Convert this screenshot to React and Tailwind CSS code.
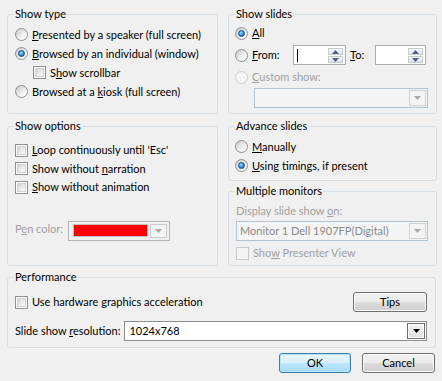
import clsx from "clsx";

const Group = ({ title, className, children }) => (
  <fieldset className={clsx("border border-[#d5dfe5] rounded-[3px] px-0 pb-0 m-0 min-w-0", className)}>
    <legend className="ml-[6px] px-[1px] leading-[16px] text-black">{title}</legend>
    {children}
  </fieldset>
);

const Radio = ({ checked, disabled }) => (
  <span
    className={clsx(
      "flex items-center justify-center w-[13px] h-[13px] rounded-full border shrink-0",
      disabled
        ? "border-[#cfcfcf] bg-[#f4f4f4]"
        : "border-[#8e8f8f] bg-[linear-gradient(135deg,#c8c8c8,#f4f4f4_65%,#ffffff)]"
    )}
  >
    {checked && (
      <span className="w-[7px] h-[7px] rounded-full border border-[#1b4f86] bg-[radial-gradient(circle_at_40%_35%,#9ddcff,#2f8fd6_55%,#11508f)]" />
    )}
  </span>
);

const Check = ({ disabled }) => (
  <span
    className={clsx(
      "flex w-[13px] h-[13px] border p-[1px] shrink-0",
      disabled ? "border-[#c9c9c9] bg-[#f4f4f4]" : "border-[#8e8f8f] bg-white"
    )}
  >
    {!disabled && (
      <span className="flex-1 border border-[#cfd1d4] bg-[linear-gradient(135deg,#cdd0d4,#f2f2f2_70%,#fafafa)]" />
    )}
  </span>
);

const Arrow = ({ color = "#a0a0a0", up = false }) => (
  <svg width="7" height="4" viewBox="0 0 7 4">
    <path d={up ? "M0 4 L3.5 0 L7 4 Z" : "M0 0 L7 0 L3.5 4 Z"} fill={color} />
  </svg>
);

const Spin = ({ width, caret }) => (
  <div className={clsx("relative h-[20px] border border-[#abadb3] bg-white flex items-center", width)}>
    {caret && <span className="ml-[3px] w-[1px] h-[13px] bg-black" />}
    <div className="absolute right-[2px] top-[2px] flex flex-col gap-[1px]">
      <span className="w-[15px] h-[7px] flex items-center justify-center border border-[#c6cdd6] bg-[linear-gradient(#f3f6fa,#dde4ee)]">
        <Arrow color="#4c6088" up />
      </span>
      <span className="w-[15px] h-[7px] flex items-center justify-center border border-[#c6cdd6] bg-[linear-gradient(#f3f6fa,#dde4ee)]">
        <Arrow color="#4c6088" />
      </span>
    </div>
  </div>
);

const DisabledCombo = ({ className, text }) => (
  <div className={clsx("h-[20px] border border-[#b5c3d1] bg-[#f4f4f4] flex items-center p-[1px]", className)}>
    <span className="flex-1 pl-[2px] text-[#8a8a8a] truncate">{text}</span>
    <span className="w-[17px] h-full flex items-center justify-center border border-[#d2d2d2] bg-[#f4f4f4]">
      <Arrow color="#a8a8a8" />
    </span>
  </div>
);

const Btn = ({ children, primary, className }) => (
  <button
    className={clsx(
      "h-[20px] rounded-[3px] border flex items-center justify-center text-black",
      primary
        ? "border-[#3c7fb1] bg-[linear-gradient(#eaf6fd,#d9f0fc_50%,#bee6fd_50%,#a7d9f5)] shadow-[inset_0_0_0_1px_#b3e0f9]"
        : "border-[#707070] bg-[linear-gradient(#f2f2f2,#ebebeb_50%,#dddddd_50%,#cfcfcf)] shadow-[inset_0_0_0_1px_#fcfcfc]",
      className
    )}
  >
    {children}
  </button>
);

const Row = ({ className, children }) => (
  <div className={clsx("flex items-center gap-[4px] whitespace-nowrap", className)}>{children}</div>
);

export default function App() {
  return (
    <div className="w-[442px] h-[381px] bg-[#f0f0f0] text-[11px] leading-[16px] text-black font-['Lato',sans-serif] pl-[7px] pt-[6px]">
      <div className="flex gap-[10px]">
        <div className="w-[211px] flex flex-col gap-[4px]">
          <Group title="Show type" className="h-[108px]">
            <div className="pl-[7px] pt-[3px]">
              <Row className="h-[19px]">
                <Radio />
                <span><u>P</u>resented by a speaker (full screen)</span>
              </Row>
              <Row className="h-[19px]">
                <Radio checked />
                <span><u>B</u>rowsed by an individual (window)</span>
              </Row>
              <Row className="h-[19px] pl-[18px]">
                <Check />
                <span>S<u>h</u>ow scrollbar</span>
              </Row>
              <Row className="h-[19px]">
                <Radio />
                <span>Browsed at a <u>k</u>iosk (full screen)</span>
              </Row>
            </div>
          </Group>
          <Group title="Show options" className="h-[148px]">
            <div className="pl-[7px] pt-[7px]">
              <Row className="h-[18.5px]">
                <Check />
                <span><u>L</u>oop continuously until 'Esc'</span>
              </Row>
              <Row className="h-[18.5px]">
                <Check />
                <span>Show without <u>n</u>arration</span>
              </Row>
              <Row className="h-[18.5px]">
                <Check />
                <span><u>S</u>how without animation</span>
              </Row>
              <div className="flex items-center mt-[24px] gap-[5px]">
                <span className="text-[#a0a0a0] mb-[3px]">P<u>e</u>n color:</span>
                <div className="w-[102px] h-[20px] border border-[#b4b4b4] flex items-center p-[2px] gap-[2px]">
                  <span className="flex-1 h-[13px] ml-[2px] bg-[#ff0000] border border-[#c0c0c0]" />
                  <span className="w-[17px] h-full flex items-center justify-center border border-[#cdcdcd] bg-[#f4f4f4]">
                    <Arrow color="#a8a8a8" />
                  </span>
                </div>
              </div>
            </div>
          </Group>
        </div>

        <div className="w-[209px] flex flex-col">
          <Group title="Show slides" className="h-[108px]">
            <div className="pl-[6px]">
              <Row className="h-[22px]">
                <Radio checked />
                <span><u>A</u>ll</span>
              </Row>
              <Row className="h-[22px]">
                <Radio />
                <span className="w-[37px]"><u>F</u>rom:</span>
                <Spin width="w-[53px]" caret />
                <span className="ml-[0px] w-[21px]"><u>T</u>o:</span>
                <Spin width="w-[51px]" />
              </Row>
              <Row className="h-[22px]">
                <Radio disabled />
                <span className="text-[#a0a0a0]"><u>C</u>ustom show:</span>
              </Row>
              <DisabledCombo className="ml-[19px] w-[174px]" />
            </div>
          </Group>
          <Group title="Advance slides" className="h-[63px] mt-[4px]">
            <div className="pl-[6px] pt-[3px]">
              <Row className="h-[19px]">
                <Radio />
                <span><u>M</u>anually</span>
              </Row>
              <Row className="h-[19px]">
                <Radio checked />
                <span><u>U</u>sing timings, if present</span>
              </Row>
            </div>
          </Group>
          <Group title="Multiple monitors" className="h-[83px] mt-[2px]">
            <div className="pl-[7px] pt-[4px]">
              <div className="text-[#a0a0a0]">Display slide show <u>o</u>n:</div>
              <DisabledCombo className="mt-[2px] w-[192px]" text="Monitor 1 Dell 1907FP(Digital)" />
              <Row className="h-[18px] mt-[3px]">
                <Check disabled />
                <span className="text-[#a0a0a0]">Sho<u>w</u> Presenter View</span>
              </Row>
            </div>
          </Group>
        </div>
      </div>

      <Group title="Performance" className="w-[429px] h-[79px] mt-[3px]">
        <div className="pl-[7px] pr-[8px] pt-[7px]">
          <div className="flex items-center justify-between h-[20px]">
            <Row>
              <Check />
              <span>Use hardware <u>g</u>raphics acceleration</span>
            </Row>
            <Btn className="w-[74px]">Tips</Btn>
          </div>
          <div className="flex items-center mt-[9px] gap-[4px]">
            <span className="whitespace-nowrap">Slide show <u>r</u>esolution:</span>
            <div className="w-[305px] h-[20px] border border-[#8e8f8f] bg-white flex items-center p-[1px]">
              <span className="flex-1 pl-[3px]">1024x768</span>
              <span className="w-[18px] h-full flex items-center justify-center border border-[#6f6f6f] shadow-[inset_0_0_0_1px_#ffffff] bg-[linear-gradient(#f4f4f4,#e0e0e0)]">
                <Arrow color="#000000" />
              </span>
            </div>
          </div>
        </div>
      </Group>

      <div className="flex justify-end gap-[11px] mt-[5px] pr-[7px]">
        <Btn primary className="w-[72px]">OK</Btn>
        <Btn className="w-[73px]">Cancel</Btn>
      </div>
    </div>
  );
}
